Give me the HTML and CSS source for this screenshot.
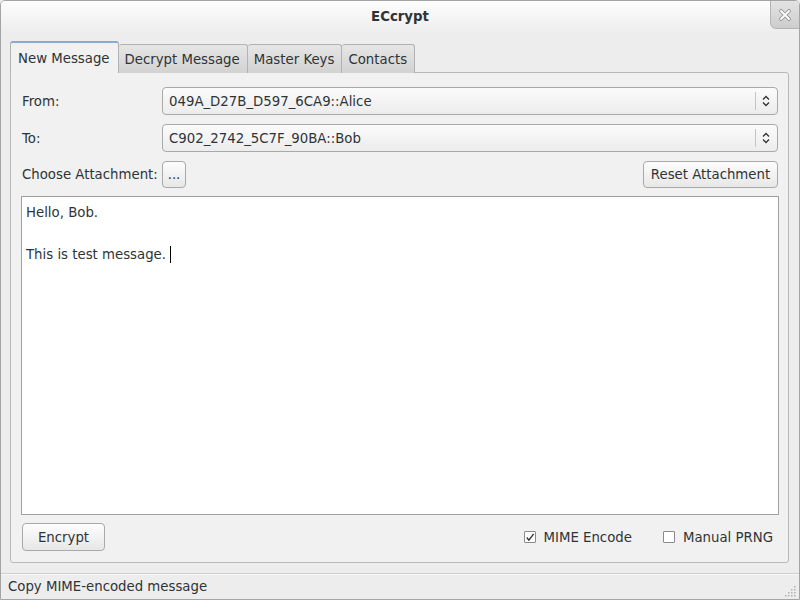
FILE: index.html
```html
<!DOCTYPE html>
<html>
<head>
<meta charset="utf-8">
<link rel="stylesheet" href="styles.css">
</head>
<body>
<div class="window">
  <div class="titlebar">
    <span class="title">ECcrypt</span>
    <div class="close">
      <svg width="14" height="14" viewBox="0 0 14 14"><path d="M3 3 L11 11 M11 3 L3 11" stroke="#8a8a8a" stroke-width="3.6" stroke-linecap="round"/><path d="M3 3 L11 11 M11 3 L3 11" stroke="#ffffff" stroke-width="2" stroke-linecap="round"/></svg>
    </div>
  </div>
  <div class="content">
    <div class="tabs">
      <div class="tab active">New Message</div>
      <div class="tab">Decrypt Message</div>
      <div class="tab">Master Keys</div>
      <div class="tab">Contacts</div>
    </div>
    <div class="panel">
      <div class="row">
        <div class="label">From:</div>
        <div class="combo">
          <span class="combo-text">049A_D27B_D597_6CA9::Alice</span>
          <span class="combo-sep"></span>
          <svg class="combo-arrow" width="8" height="12" viewBox="0 0 8 12"><path d="M1 4.5 L4 1.5 L7 4.5 M1 7.5 L4 10.5 L7 7.5" fill="none" stroke="#2e3436" stroke-width="1.3"/></svg>
        </div>
      </div>
      <div class="row">
        <div class="label">To:</div>
        <div class="combo">
          <span class="combo-text">C902_2742_5C7F_90BA::Bob</span>
          <span class="combo-sep"></span>
          <svg class="combo-arrow" width="8" height="12" viewBox="0 0 8 12"><path d="M1 4.5 L4 1.5 L7 4.5 M1 7.5 L4 10.5 L7 7.5" fill="none" stroke="#2e3436" stroke-width="1.3"/></svg>
        </div>
      </div>
      <div class="row attach">
        <div class="label">Choose Attachment:</div>
        <div class="btn small">...</div>
        <div class="spacer"></div>
        <div class="btn reset">Reset Attachment</div>
      </div>
      <div class="editor">
        <div class="line">Hello, Bob.</div>
        <div class="line">&nbsp;</div>
        <div class="line">This is test message. <span class="cursor"></span></div>
      </div>
      <div class="row bottom">
        <div class="btn encrypt">Encrypt</div>
        <div class="spacer"></div>
        <label class="check">
          <span class="box checked">
            <svg width="11" height="11" viewBox="0 0 11 11"><path d="M2 5.5 L4.3 8.5 L9.5 1.5" fill="none" stroke="#2e3436" stroke-width="1.5"/></svg>
          </span>
          <span>MIME Encode</span>
        </label>
        <label class="check">
          <span class="box"></span>
          <span>Manual PRNG</span>
        </label>
      </div>
    </div>
  </div>
  <div class="statusbar">
    <span>Copy MIME-encoded message</span>
    <svg class="grip" width="12" height="12" viewBox="0 0 12 12">
      <g fill="#b0b0b0">
        <rect x="9" y="1" width="1.5" height="1.5"/>
        <rect x="6" y="4" width="1.5" height="1.5"/><rect x="9" y="4" width="1.5" height="1.5"/>
        <rect x="3" y="7" width="1.5" height="1.5"/><rect x="6" y="7" width="1.5" height="1.5"/><rect x="9" y="7" width="1.5" height="1.5"/>
        <rect x="0" y="10" width="1.5" height="1.5"/><rect x="3" y="10" width="1.5" height="1.5"/><rect x="6" y="10" width="1.5" height="1.5"/><rect x="9" y="10" width="1.5" height="1.5"/>
      </g>
    </svg>
  </div>
</div>
</body>
</html>
```

FILE: styles.css
```css
html, body {
  margin: 0;
  padding: 0;
  background: #ededed;
}
body {
  font-family: "DejaVu Sans", sans-serif;
  font-size: 13.3px;
  color: #2e3436;
}
.window {
  width: 800px;
  height: 600px;
  box-sizing: border-box;
  border: 1px solid #a4a4a4;
  border-radius: 5px 5px 0 0;
  background: #ededed;
  display: flex;
  flex-direction: column;
  position: relative;
  overflow: hidden;
}
.titlebar {
  height: 32px;
  flex: none;
  display: flex;
  align-items: center;
  justify-content: center;
  background: linear-gradient(#fdfdfd, #ededed);
}
.title {
  font-weight: bold;
  font-size: 13.3px;
  color: #2e3436;
  margin-bottom: 1px;
}
.close {
  position: absolute;
  top: -1px;
  right: -1px;
  width: 30px;
  height: 29px;
  box-sizing: border-box;
  background: linear-gradient(#e3e3e3, #cdcdcd);
  border: 1px solid #b4b4b4;
  border-radius: 0 0 0 6px;
  display: flex;
  align-items: center;
  justify-content: center;
}
.content {
  flex: 1;
  display: flex;
  flex-direction: column;
  padding: 8px 10px 0 9px;
}
.tabs {
  display: flex;
  align-items: flex-end;
  height: 32px;
  margin-bottom: -1px;
  position: relative;
  z-index: 1;
}
.tab {
  height: 29px;
  box-sizing: border-box;
  padding: 0 7px 0 6px;
  display: flex;
  align-items: center;
  border: 1px solid #b2b2b2;
  border-bottom: none;
  border-left: none;
  border-radius: 3px 3px 0 0;
  background: linear-gradient(#e6e6e6, #d2d2d2);
}
.tab.active {
  height: 32px;
  padding: 1px 8px 0 7px;
  border-left: 1px solid #b2b2b2;
  border-top: 2px solid #8aa9cf;
  background: #f1f1f1;
}
.panel {
  height: 491px;
  box-sizing: border-box;
  border: 1px solid #b8b8b8;
  border-radius: 0 3px 3px 3px;
  background: #f1f1f1;
  padding: 14px 10px 0 11px;
  display: flex;
  flex-direction: column;
  gap: 9px;
}
.row {
  display: flex;
  align-items: center;
}
.label {
  width: 140px;
  flex: none;
  white-space: nowrap;
}
.spacer {
  flex: 1;
}
.combo {
  flex: 1;
  height: 28px;
  box-sizing: border-box;
  border: 1px solid #a9a9a9;
  border-radius: 4px;
  background: linear-gradient(#fbfbfb, #ececec);
  display: flex;
  align-items: center;
  padding: 0 7px 0 6px;
}
.combo-text {
  flex: 1;
}
.combo-sep {
  width: 1px;
  height: 18px;
  background: #c4c4c4;
  margin-right: 6px;
}
.btn {
  height: 27px;
  box-sizing: border-box;
  border: 1px solid #a9a9a9;
  border-radius: 4px;
  background: linear-gradient(#fdfdfd, #e7e7e7);
  display: flex;
  align-items: center;
  justify-content: center;
}
.btn.small {
  width: 24px;
}
.btn.reset {
  width: 135px;
}
.editor {
  height: 319px;
  margin: -1px -1px 0 -1px;
  box-sizing: border-box;
  border: 1px solid #a0a0a0;
  background: #ffffff;
  padding: 5px 4px;
  line-height: 21px;
}
.cursor {
  display: inline-block;
  width: 1px;
  height: 17px;
  background: #000;
  vertical-align: -4px;
}
.row.bottom {
  margin-top: -1px;
}
.btn.encrypt {
  width: 83px;
  height: 28px;
}
.check {
  display: flex;
  align-items: center;
  gap: 8px;
  margin-left: 31px;
}
.check:last-child {
  margin-right: 5px;
}
.box {
  width: 12px;
  height: 12px;
  box-sizing: border-box;
  border: 1px solid #8a8a8a;
  border-radius: 1px;
  background: #fff;
  display: flex;
  align-items: center;
  justify-content: center;
}
.statusbar {
  height: 26px;
  flex: none;
  margin-top: 10px;
  border-top: 1px solid #cfcfcf;
  box-shadow: inset 0 1px 0 #f8f8f8;
  display: flex;
  align-items: center;
  padding-left: 7px;
  padding-bottom: 1px;
  box-sizing: border-box;
  position: relative;
}
.grip {
  position: absolute;
  right: 2px;
  bottom: 2px;
}
```
